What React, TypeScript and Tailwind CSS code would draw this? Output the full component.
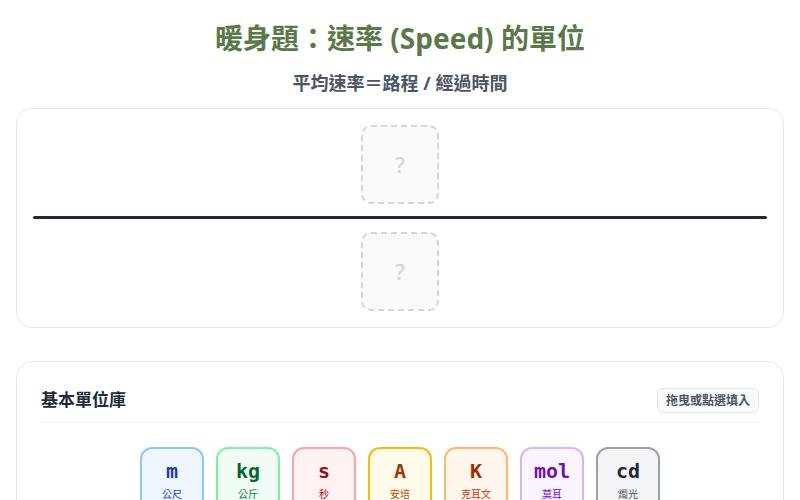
import React from "react";

const units = [
  { sym: "m", name: "公尺", box: "border-blue-300 bg-blue-50", sc: "text-blue-800", nc: "text-blue-700" },
  { sym: "kg", name: "公斤", box: "border-green-300 bg-green-50", sc: "text-green-800", nc: "text-green-700" },
  { sym: "s", name: "秒", box: "border-red-300 bg-red-50", sc: "text-red-800", nc: "text-red-700" },
  { sym: "A", name: "安培", box: "border-amber-400 bg-amber-50", sc: "text-amber-800", nc: "text-amber-700" },
  { sym: "K", name: "克耳文", box: "border-orange-300 bg-orange-50", sc: "text-orange-800", nc: "text-orange-700" },
  { sym: "mol", name: "莫耳", box: "border-purple-300 bg-purple-50", sc: "text-purple-800", nc: "text-purple-700" },
  { sym: "cd", name: "燭光", box: "border-gray-400 bg-gray-100", sc: "text-gray-800", nc: "text-gray-600" },
];

const Slot = () => (
  <div className="w-[78px] h-[79px] mx-auto rounded-[10px] border-2 border-dashed border-gray-300 bg-gray-50 flex items-center justify-center text-[22px] font-medium text-gray-300">
    ?
  </div>
);

export default function App() {
  return (
    <div
      className="min-h-[500px] bg-white px-4 pt-5 pb-10"
      style={{ fontFamily: '"Noto Sans", "Noto Sans CJK TC", sans-serif' }}
    >
      <h1 className="text-center text-[28px] leading-9 font-bold text-[#5b7849]">
        暖身題：速率 (Speed) 的單位
      </h1>
      <p className="mt-[15px] text-center text-[18px] leading-6 font-bold text-gray-600">
        平均速率＝路程 / 經過時間
      </p>

      <div className="mt-[13px] rounded-2xl border border-gray-200 bg-white p-4 flex flex-col">
        <Slot />
        <div className="mt-3 mb-[13px] h-[3px] bg-gray-800 rounded-full" />
        <Slot />
      </div>

      <div className="mt-[33px] rounded-2xl border border-gray-200 bg-white px-6 pt-6 pb-6">
        <div className="flex items-center justify-between pb-2 border-b border-gray-100">
          <h2 className="text-[17px] font-bold text-gray-800 leading-7">基本單位庫</h2>
          <span className="rounded-md border border-gray-200 bg-gray-50 px-2 py-[3px] text-[12px] leading-[17px] font-bold text-gray-600">
            拖曳或點選填入
          </span>
        </div>
        <div className="mt-6 flex justify-center gap-3">
          {units.map((u) => (
            <div
              key={u.sym}
              className={`w-16 h-[72px] rounded-xl border-2 ${u.box} flex flex-col items-center pt-[10px]`}
            >
              <span
                className={`text-[20px] leading-6 font-bold ${u.sc}`}
                style={{ fontFamily: '"DejaVu Sans Mono", monospace' }}
              >
                {u.sym}
              </span>
              <span className={`mt-[5px] text-[10px] leading-3 ${u.nc}`}>{u.name}</span>
            </div>
          ))}
        </div>
      </div>
    </div>
  );
}
